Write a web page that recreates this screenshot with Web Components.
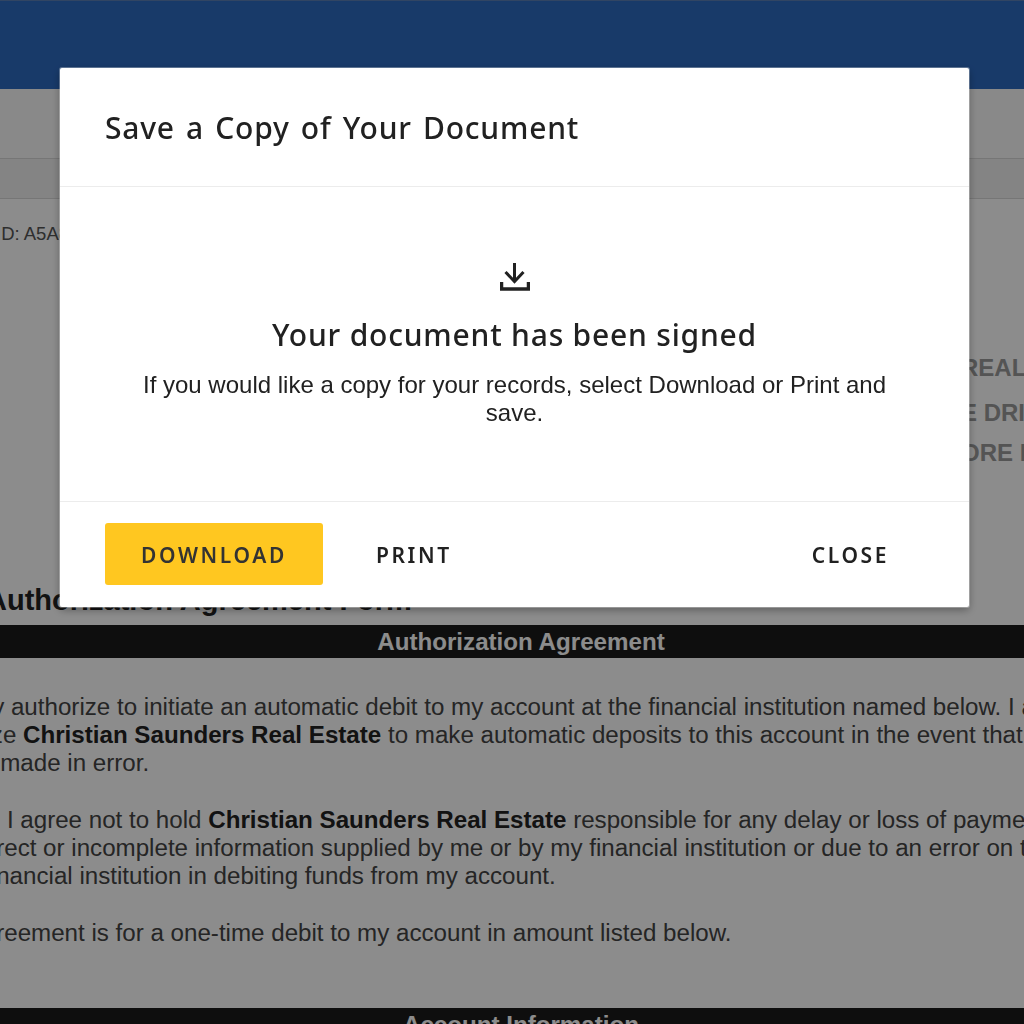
<!DOCTYPE html>
<html lang="en">
<head>
<meta charset="utf-8">
<title>Save a Copy of Your Document</title>
<style>
  html, body { margin: 0; height: 100%; overflow: hidden; background: #fff; }
  body { font-family: "Liberation Sans", Arial, sans-serif; }
</style>
</head>
<body>
<signing-page>
  <doc-banner slot="top"></doc-banner>
  <agreement-form></agreement-form>
</signing-page>
<save-dialog heading="Save a Copy of Your Document"></save-dialog>

<script>
(function () {
  class SigningPage extends HTMLElement {
    constructor() {
      super();
      this.attachShadow({ mode: "open" });
      this.shadowRoot.innerHTML = `
      <style>
        :host { display: block; width: 1024px; height: 1024px; overflow: hidden; background: #fff; }
        .brand { height: 89px; background: #2c6ac0; border-top: 1px solid #5a7fb5; box-sizing: border-box; }
        .toolbar { height: 70px; background: #fafafa; border-bottom: 1px solid #d8d8d8; box-sizing: border-box; }
        .strip { height: 40px; background: #f0f0f0; border-bottom: 1px solid #d8d8d8; box-sizing: border-box; }
      </style>
      <div class="brand"></div>
      <div class="toolbar"></div>
      <div class="strip"></div>
      <slot name="top"></slot>
      <slot></slot>`;
    }
  }

  class DocBanner extends HTMLElement {
    constructor() {
      super();
      this.attachShadow({ mode: "open" });
      this.shadowRoot.innerHTML = `
      <style>
        :host { display: block; height: 389px; font: 18.5px/1 "Liberation Sans", Arial, sans-serif; color: #555; overflow: hidden; }
        .env { padding-top: 26px; margin-left: -4px; white-space: nowrap; }
        .company { margin: 110px 0 0 961px; font-size: 24px; line-height: 28px; font-weight: 700; white-space: nowrap; color: #999; }
        .company div + div { margin-top: 17px; }
        .company div:last-child { margin-top: 12px; }
      </style>
      <div class="env">ID: A5A8C2F1-7D3E-4B90</div>
      <div class="company"><div>REAL</div><div>E DRI</div><div>ORE I</div></div>`;
    }
  }

  class AgreementForm extends HTMLElement {
    constructor() {
      super();
      this.attachShadow({ mode: "open" });
      this.shadowRoot.innerHTML = `
      <style>
        :host { display: block; margin-left: -83px; width: 1208px; font: 24.15px/28px "Liberation Sans", Arial, sans-serif; color: #444; white-space: nowrap; }
        h2 { margin: 0; height: 37px; font-size: 29px; line-height: 24px; font-weight: 700; color: #222; padding-left: 69px; }
        .bar { background: #1b1b1b; color: #fff; font-weight: 700; text-align: center; height: 33px; line-height: 33px; }
        .body { padding-top: 35px; height: 350px; box-sizing: border-box; }
        p { margin: 0 0 29px; }
        b { color: #222; }
      </style>
      <h2>Authorization Agreement Form</h2>
      <div class="bar">Authorization Agreement</div>
      <div class="body">
        <p>I hereby authorize to initiate an automatic debit to my account at the financial institution named below. I also<br>authorize <b>Christian Saunders Real Estate</b> to make automatic deposits to this account in the event that a<br>debit is made in error.</p>
        <p>Further, I agree not to hold <b>Christian Saunders Real Estate</b> responsible for any delay or loss of payment due<br>to incorrect or incomplete information supplied by me or by my financial institution or due to an error on the part<br>of the financial institution in debiting funds from my account.</p>
        <p>This agreement is for a one-time debit to my account in amount listed below.</p>
      </div>
      <div class="bar">Account Information</div>`;
    }
  }

  class SaveDialog extends HTMLElement {
    constructor() {
      super();
      this.attachShadow({ mode: "open" });
      this.shadowRoot.innerHTML = `
      <style>
        :host { position: fixed; inset: 0; display: flex; align-items: flex-start; justify-content: flex-start; padding: 68px 0 0 60px; box-sizing: border-box; background: rgba(0,0,0,.45); }
        .modal { width: 909px; height: 539px; background: #fff; display: flex; flex-direction: column; box-shadow: 0 0 0 1px rgba(255,255,255,.3), 0 3px 8px rgba(0,0,0,.35); border-radius: 2px; color: #212121; }
        header { height: 118px; padding-left: 45px; display: flex; align-items: center; border-bottom: 1px solid #ececec; font: 500 30px "Noto Sans", sans-serif; letter-spacing: .8px; word-spacing: 2.6px; }
        main { flex: 1; display: flex; flex-direction: column; align-items: center; text-align: center; padding-top: 76px; box-sizing: border-box; }
        svg { display: block; width: 30px; height: 28px; }
        h3 { margin: 24px 0 0; font: 500 30px/40px "Noto Sans", sans-serif; letter-spacing: .8px; }
        p { margin: 16px 0 0; width: 780px; font: 24px/28px "Liberation Sans", Arial, sans-serif; }
        footer { height: 106px; padding: 21px 45px 0; border-top: 1px solid #ececec; box-sizing: border-box; display: flex; align-items: flex-start; }
        button { height: 62px; padding: 2px 35px 0; border: 0; background: none; border-radius: 3px; font: 600 21px "Noto Sans", sans-serif; letter-spacing: 2.6px; color: #212121; }
        button.primary { width: 218px; padding: 2px 0 0; background: #ffc720; color: #333; margin-right: 18px; }
        .spacer { flex: 1; }
      </style>
      <div class="modal" role="dialog">
        <header>${this.getAttribute("heading")}</header>
        <main>
          <svg viewBox="0 0 30 28" fill="none" stroke="#212121" stroke-width="3"><path d="M14.5 0v19"/><path d="M5.5 9l9 9.5 9-9.5"/><path d="M1.5 19v7h27v-7" stroke-width="3.5"/></svg>
          <h3>Your document has been signed</h3>
          <p>If you would like a copy for your records, select Download or Print and save.</p>
        </main>
        <footer>
          <button class="primary">DOWNLOAD</button>
          <button>PRINT</button>
          <span class="spacer"></span>
          <button>CLOSE</button>
        </footer>
      </div>`;
    }
  }

  customElements.define("signing-page", SigningPage);
  customElements.define("doc-banner", DocBanner);
  customElements.define("agreement-form", AgreementForm);
  customElements.define("save-dialog", SaveDialog);
})();
</script>
</body>
</html>
